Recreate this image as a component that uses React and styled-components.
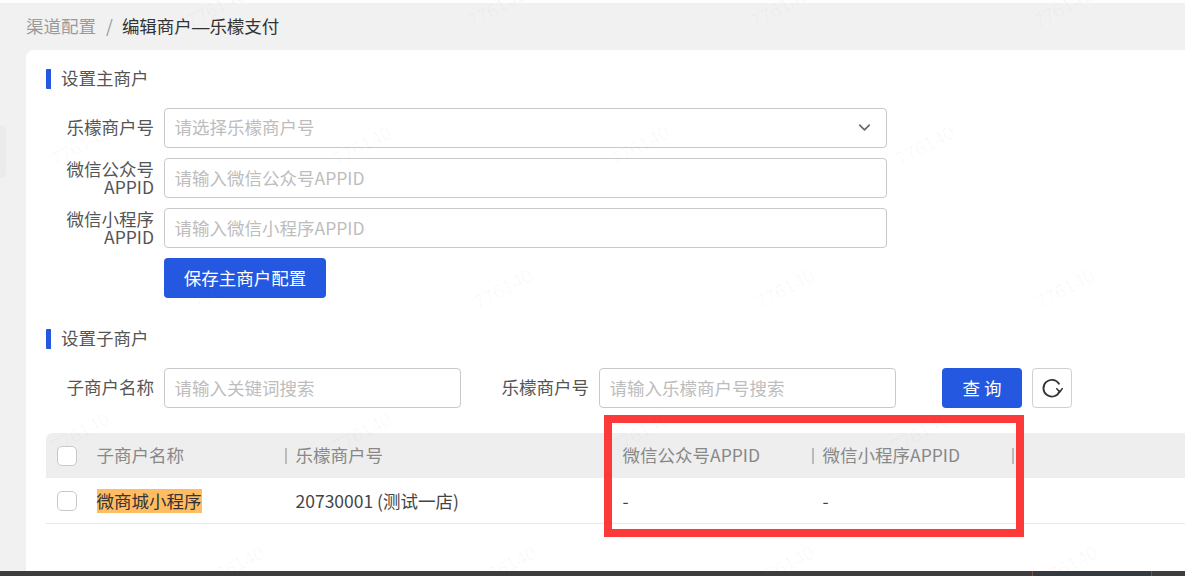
import styled, { createGlobalStyle } from "styled-components";
import { ChevronDown } from "lucide-react";

const markRows = [
    { y: 8, xs: [216, 497, 780, 1063] },
    { y: 146, xs: [80, 362, 640, 925] },
    { y: 289, xs: [222, 503, 785, 1065] },
    { y: 433, xs: [80, 362, 640, 920] },
    { y: 566, xs: [235, 507, 785, 1068] },
];

export default function App(){
    return(
        <>
            <GlobalStyle/>
            <Page>
                <TopStrip/>
                <Main>
                    <Crumbs>
                        <span className="parent">渠道配置</span>
                        <span className="slash">/</span>
                        <span className="current">编辑商户<Dash>—</Dash>乐檬支付</span>
                    </Crumbs>
                    <Card>
                        <SectionTitle>设置主商户</SectionTitle>
                        <MainForm>
                            <FormRow>
                                <Label $single>乐檬商户号</Label>
                                <SelectBox>
                                    <span>请选择乐檬商户号</span>
                                    <ChevronDown size={19} color="#666" strokeWidth={2}/>
                                </SelectBox>
                            </FormRow>
                            <FormRow>
                                <Label>微信公众号<br/>APPID</Label>
                                <TextInput $width={723} placeholder="请输入微信公众号APPID"/>
                            </FormRow>
                            <FormRow>
                                <Label>微信小程序<br/>APPID</Label>
                                <TextInput $width={723} placeholder="请输入微信小程序APPID"/>
                            </FormRow>
                            <FormRow>
                                <Spacer/>
                                <SaveButton>保存主商户配置</SaveButton>
                            </FormRow>
                        </MainForm>
                        <SubTitle>设置子商户</SubTitle>
                        <SearchBar>
                            <Label $single>子商户名称</Label>
                            <TextInput $width={297} placeholder="请输入关键词搜索"/>
                            <SecondLabel $single>乐檬商户号</SecondLabel>
                            <TextInput $width={297} placeholder="请输入乐檬商户号搜索"/>
                            <QueryButton>查 询</QueryButton>
                            <RefreshButton aria-label="刷新">
                                <svg width="22" height="22" viewBox="0 0 22 22" fill="none">
                                    <path d="M18 6.8A8.4 8.4 0 1 0 18.6 14.4" stroke="#333" strokeWidth="1.8" strokeLinecap="round"/>
                                    <path d="M15.8 11.8l3 3.2 2.4-3.4" stroke="#333" strokeWidth="1.6" strokeLinecap="round" strokeLinejoin="round"/>
                                </svg>
                            </RefreshButton>
                        </SearchBar>
                        <Table>
                            <HeadRow>
                                <CheckCell><Check type="checkbox"/></CheckCell>
                                <HeadCell>子商户名称</HeadCell>
                                <HeadCell $divided>乐檬商户号</HeadCell>
                                <HeadCell>微信公众号APPID</HeadCell>
                                <HeadCell $divided>微信小程序APPID</HeadCell>
                                <HeadCell $divided/>
                            </HeadRow>
                            <BodyRow>
                                <CheckCell><Check type="checkbox"/></CheckCell>
                                <BodyCell><Highlight>微商城小程序</Highlight></BodyCell>
                                <BodyCell>20730001 (测试一店)</BodyCell>
                                <BodyCell>-</BodyCell>
                                <BodyCell>-</BodyCell>
                                <BodyCell/>
                            </BodyRow>
                        </Table>
                    </Card>
                </Main>
                <BottomBar>
                    <BarThumb/>
                </BottomBar>
                <SideTab/>
                <RedMark/>
                {markRows.map(row => row.xs.map(x => (
                    <Watermark key={`${x}-${row.y}`} style={{ left: x, top: row.y }}>776140</Watermark>
                )))}
            </Page>
        </>
    )
}

const GlobalStyle = createGlobalStyle`
    html, body{
        margin: 0;
        padding: 0;
    }
    body{
        font-family: "Noto Sans CJK SC", "Noto Sans", sans-serif;
        background-color: #f1f1f1;
    }
    *{
        box-sizing: border-box;
    }
`
const Page = styled.div`
    position: relative;
    width: 1185px;
    height: 576px;
    overflow: hidden;
    display: flex;
    flex-direction: column;
    background-color: #f1f1f1;
    font-size: 17.5px;
    color: #555;
`
const TopStrip = styled.div`
    height: 3px;
    flex-shrink: 0;
    background-color: #fdfdfd;
`
const Main = styled.div`
    flex: 1;
    min-height: 0;
    padding-left: 26px;
    display: flex;
    flex-direction: column;
`
const Crumbs = styled.div`
    height: 47px;
    flex-shrink: 0;
    display: flex;
    align-items: center;
    padding-bottom: 3px;
    .parent{
        color: #9a9a9a;
    }
    .slash{
        color: #9a9a9a;
        margin: 0 9px 0 10px;
    }
    .current{
        color: #333;
    }
`
const Dash = styled.span`
    font-family: "Liberation Sans", sans-serif;
`
const Card = styled.div`
    flex: 1;
    min-height: 0;
    padding: 19px 0 0 20px;
    background-color: #fff;
    border-top-left-radius: 8px;
`
const SectionTitle = styled.div`
    height: 20px;
    padding: 0 0 2px 10px;
    border-left: 5px solid #2558e0;
    border-radius: 1px;
    display: flex;
    align-items: center;
    line-height: 20px;
    color: #555;
`
const SubTitle = styled(SectionTitle)`
    margin-top: 31px;
`
const MainForm = styled.div`
    margin-top: 19px;
    display: flex;
    flex-direction: column;
    gap: 10px;
`
const FormRow = styled.div`
    display: flex;
    align-items: center;
    gap: 10px;
`
const Label = styled.div`
    width: 108px;
    flex-shrink: 0;
    padding-bottom: ${props => props.$single ? "2px" : "0"};
    text-align: right;
    line-height: 18px;
    color: #555;
`
const SecondLabel = styled(Label)`
    width: 88px;
    margin-left: 30px;
`
const Spacer = styled.div`
    width: 108px;
`
const TextInput = styled.input`
    width: ${props => props.$width}px;
    height: 40px;
    flex-shrink: 0;
    padding: 0 10px 2px 9.5px;
    background-color: #fff;
    border: 1.5px solid #c9c9c9;
    border-radius: 4px;
    font: inherit;
    outline: none;
    &::placeholder{
        color: #bdbdbd;
        opacity: 1;
    }
`
const SelectBox = styled.div`
    width: 723px;
    height: 40px;
    padding: 0 5px 3px 9.5px;
    border: 1.5px solid #c9c9c9;
    border-radius: 4px;
    display: flex;
    align-items: center;
    justify-content: space-between;
    color: #bdbdbd;
    svg{
        margin: 2px 7px 0 0;
    }
`
const SaveButton = styled.button`
    width: 162px;
    height: 40px;
    padding: 0 0 2px;
    background-color: #2558e0;
    border: none;
    border-radius: 4px;
    color: #fff;
    font: inherit;
`
const SearchBar = styled.div`
    margin-top: 19px;
    display: flex;
    align-items: center;
    gap: 10px;
`
const QueryButton = styled(SaveButton)`
    width: 80px;
    margin-left: 36px;
`
const RefreshButton = styled.button`
    width: 40px;
    height: 40px;
    padding: 0;
    background-color: #fff;
    border: 1.5px solid #d0d0d0;
    border-radius: 4px;
    display: flex;
    align-items: center;
    justify-content: center;
`
const Table = styled.div`
    margin-top: 25px;
`
const HeadRow = styled.div`
    height: 45px;
    display: grid;
    grid-template-columns: 40px 199px 327px 200px 200px 1fr;
    align-items: center;
    background-color: #eeeeee;
    border-top-left-radius: 6px;
    color: #888;
`
const BodyRow = styled(HeadRow)`
    height: 46px;
    background-color: #fff;
    border-radius: 0;
    border-bottom: 1.5px solid #e8e8e8;
    color: #444;
`
const CheckCell = styled.div`
    display: flex;
    padding-left: 11px;
`
const Check = styled.input`
    appearance: none;
    width: 20px;
    height: 20px;
    margin: 0;
    background-color: #fff;
    border: 1.5px solid #c9c9c9;
    border-radius: 5px;
`
const HeadCell = styled.div`
    position: relative;
    min-height: 16px;
    padding: 0 0 2px 10.5px;
    white-space: nowrap;
    ${props => props.$divided && `
        &::before{
            content: "";
            position: absolute;
            left: 0;
            top: 50%;
            width: 1.5px;
            height: 16px;
            margin-top: -8px;
            background-color: #bbb;
        }
    `}
`
const BodyCell = styled.div`
    padding-left: 10.5px;
    white-space: nowrap;
`
const Highlight = styled.span`
    display: inline-block;
    line-height: 24px;
    background-color: #ffbc62;
    color: #333;
`
const BottomBar = styled.div`
    height: 5px;
    flex-shrink: 0;
    padding-right: 33px;
    display: flex;
    justify-content: flex-end;
    background-color: #3d3d3d;
`
const BarThumb = styled.div`
    width: 120px;
    background-color: #353a40;
    border-left: 1px solid #8a4a4a;
    border-right: 1px solid #8a4a4a;
`
const SideTab = styled.div`
    position: absolute;
    left: 0;
    top: 125px;
    width: 6px;
    height: 53px;
    background-color: #ebebeb;
    border-radius: 0 6px 6px 0;
`
const RedMark = styled.div`
    position: absolute;
    left: 604px;
    top: 415px;
    width: 420px;
    height: 122px;
    border: 8px solid #fd3a3a;
    pointer-events: none;
`
const Watermark = styled.div`
    position: absolute;
    transform: translate(-50%, -50%) rotate(-28deg);
    font-family: "Liberation Sans", sans-serif;
    font-size: 19px;
    line-height: 1;
    color: rgba(0, 0, 0, 0.03);
    pointer-events: none;
    white-space: nowrap;
`
